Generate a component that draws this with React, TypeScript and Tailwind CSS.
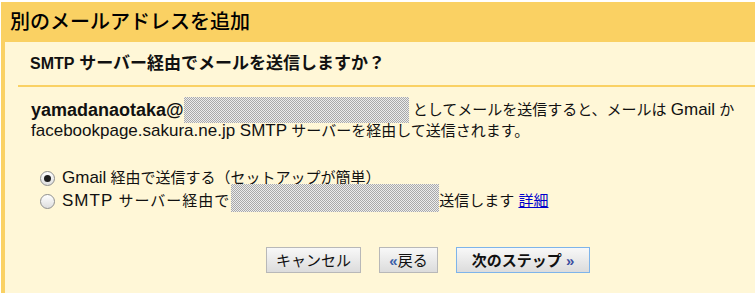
const jp = '"Liberation Sans", "Noto Sans CJK JP", sans-serif';

function Masked({ w, h, className = "" }: { w: number; h: number; className?: string }) {
  return (
    <span
      className={`inline-block shrink-0 bg-[image:repeating-conic-gradient(#a9a9a9_0%_25%,#ececec_0%_50%)] bg-[length:2px_2px] ${className}`}
      style={{ width: w, height: h }}
    />
  );
}

function Radio({ checked }: { checked?: boolean }) {
  return (
    <span className="flex h-[15px] w-[15px] shrink-0 items-center justify-center rounded-full border border-[#8e8f8f] bg-gradient-to-b from-[#ffffff] to-[#dedede]">
      {checked && <span className="h-[7px] w-[7px] rounded-full bg-[#1e1e1e]" />}
    </span>
  );
}

function Latin({ children, bold }: { children: React.ReactNode; bold?: boolean }) {
  return <span className={bold ? "text-[18px] font-bold" : "text-[17px]"}>{children}</span>;
}

export default function App() {
  return (
    <div className="h-[295px] w-[755px] bg-white pl-[1px] pt-[2px] text-[#111]" style={{ fontFamily: jp }}>
      <div className="flex h-[40px] items-center bg-[#fad163] pl-[9px]">
        <h1 className="text-[20px] font-medium leading-none text-black">別のメールアドレスを追加</h1>
      </div>

      <div className="h-[251px] border-l-4 border-[#fad163] bg-[#fff7d7]">
        <div className="ml-[13px] flex h-[45px] items-center border-b-2 border-[#fad163] pl-[12px]">
          <h2 className="text-[17px] font-bold leading-none">
            <span className="text-[16px]">SMTP</span> サーバー経由でメールを送信しますか？
          </h2>
        </div>

        <div className="pl-[26px] pt-[10px] text-[15px]">
          <div className="flex h-[26px] items-center whitespace-nowrap">
            <Latin bold>yamadanaotaka@</Latin>
            <Masked w={225} h={26} />
            <span className="ml-[4px]">
              としてメールを送信すると、メールは <Latin>Gmail</Latin> か
            </span>
          </div>
          <div className="-mt-[2px] leading-[20px] whitespace-nowrap">
            <Latin>facebookpage.sakura.ne.jp SMTP</Latin> サーバーを経由して送信されます。
          </div>
        </div>

        <div className="mt-[28px] pl-[35px] text-[15px]">
          <div className="flex h-[18px] items-center gap-[7px] whitespace-nowrap">
            <Radio checked />
            <span>
              <Latin>Gmail</Latin> 経由で送信する（セットアップが簡単）
            </span>
          </div>
          <div className="flex h-[28px] items-center gap-[7px] whitespace-nowrap">
            <Radio />
            <span className="tracking-[1px]">
              <Latin>SMTP</Latin> サーバー経由で
            </span>
            <Masked w={208} h={28} className="-ml-[6px] mb-[6px]" />
            <span className="-ml-[7px]">
              送信します{" "}
              <a className="text-[#0000cc] underline" href="#">
                詳細
              </a>
            </span>
          </div>
        </div>

        <div className="mt-[32px] flex gap-[18px] pl-[261px] text-[15px]">
          <button className="h-[26px] w-[95px] border border-[#b8b8b8] bg-gradient-to-b from-[#f8f8f8] to-[#dcdcdc] leading-none">
            キャンセル
          </button>
          <button className="h-[26px] w-[59px] border border-[#b8b8b8] bg-gradient-to-b from-[#f8f8f8] to-[#dcdcdc] leading-none">
            <span className="font-bold text-[#3b5fa8]">«</span>戻る
          </button>
          <button className="h-[26px] w-[134px] border border-[#7eb4ea] bg-gradient-to-b from-[#f8f8f8] to-[#dcdcdc] font-bold leading-none">
            次のステップ <span className="text-[#3b4fa0]">»</span>
          </button>
        </div>
      </div>
    </div>
  );
}
